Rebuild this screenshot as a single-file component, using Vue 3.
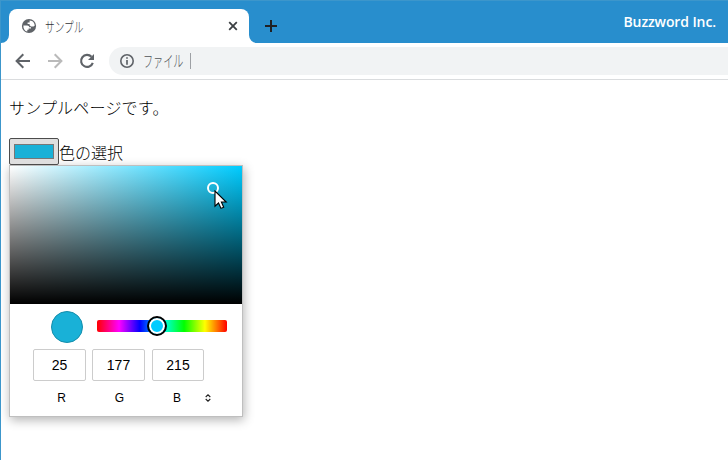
<script setup>
import { ref } from 'vue'

const channels = ref([
  { name: 'R', value: 25 },
  { name: 'G', value: 177 },
  { name: 'B', value: 215 },
])
</script>

<template>
  <div class="window">
    <header class="tabstrip">
      <svg class="curve" width="8" height="8" viewBox="0 0 8 8"><path d="M8 0V8H0A8 8 0 0 0 8 0Z" fill="#fff" /></svg>
      <div class="tab">
        <svg class="globe" width="16" height="16" viewBox="0 0 16 16">
          <circle cx="8" cy="8" r="7.1" fill="#5f6368" />
          <path d="M2.4 7.4H6.2C7.4 7.4 8.2 8.1 8.2 9.2H10V10.6H7.6V11.8H6.3V13.6C3.8 13 2.1 10.7 2.4 7.4Z" fill="#fff" />
          <path d="M8.6 2.4 11 3.1C12.7 4.1 13.7 5.8 13.7 7.7L12.4 8.5H10L8.6 7.3V6.1H6.6V4.6H8.6Z" fill="#fff" />
        </svg>
        <span class="tab-title">サンプル</span>
        <svg class="close" width="10" height="10" viewBox="0 0 10 10"><path d="M1.2 1.2 8.8 8.8M8.8 1.2 1.2 8.8" stroke="#3c4043" stroke-width="1.8" /></svg>
      </div>
      <svg class="curve" width="8" height="8" viewBox="0 0 8 8"><path d="M0 0V8H8A8 8 0 0 1 0 0Z" fill="#fff" /></svg>
      <svg class="plus" width="12" height="12" viewBox="0 0 12 12"><path d="M6 0V12M0 6H12" stroke="#202124" stroke-width="2" /></svg>
      <span class="brand">Buzzword Inc.</span>
    </header>

    <nav class="toolbar">
      <svg width="16" height="16" viewBox="0 0 16 16" fill="none" stroke="#5f6368" stroke-width="2"><path d="M15 8H2M8.3 1.3 1.6 8 8.3 14.7" /></svg>
      <svg width="16" height="16" viewBox="0 0 16 16" fill="none" stroke="#bababa" stroke-width="2"><path d="M1 8H14M7.7 1.3 14.4 8 7.7 14.7" /></svg>
      <svg width="16" height="16" viewBox="0 0 16 16"><path d="M12.5 3.8A6 6 0 1 0 13.8 9.8" fill="none" stroke="#5f6368" stroke-width="2.1" /><path d="M15 1V7H9Z" fill="#5f6368" /></svg>
      <div class="omnibox">
        <svg width="16" height="16" viewBox="0 0 16 16"><circle cx="8" cy="8" r="6.2" fill="none" stroke="#5f6368" stroke-width="1.6" /><path d="M8 4.2V5.8M8 7.1V11.8" stroke="#5f6368" stroke-width="1.7" /></svg>
        <span class="scheme">ファイル</span>
        <i class="divider"></i>
      </div>
    </nav>

    <main class="page">
      <p>サンプルページです。</p>
      <div class="field">
        <button class="swatch"><i></i></button>
        <label>色の選択</label>
      </div>
      <section class="picker">
        <div class="spectrum">
          <i class="ring"></i>
          <svg class="cursor" width="14" height="20" viewBox="0 0 14 20"><path d="M1 1V16.2L4.5 13L7 18.4L9.7 17.2L7.4 12H12.2Z" fill="#fff" stroke="#000" stroke-width="1.1" /></svg>
        </div>
        <div class="controls">
          <i class="preview"></i>
          <div class="hue"><i class="knob"></i></div>
        </div>
        <div class="channels">
          <div v-for="c in channels" :key="c.name" class="channel">
            <input v-model="c.value" type="text" />
            <span>{{ c.name }}</span>
          </div>
          <svg class="updown" width="6" height="8" viewBox="0 0 6 8"><path d="M.7 3 3 .8 5.3 3M.7 5 3 7.2 5.3 5" fill="none" stroke="#222" stroke-width="1.1" /></svg>
        </div>
      </section>
    </main>
  </div>
</template>

<style>
body { margin: 0; background: #fff; overflow: hidden; }
</style>

<style scoped>
* { box-sizing: border-box; }
svg { display: block; flex: none; }
.window {
  width: 728px; height: 460px; overflow: hidden;
  border-left: 1px solid #3c96cb; background: #fff;
  font-family: "Liberation Sans", "Noto Sans CJK JP", sans-serif;
}
.tabstrip {
  height: 43px; display: flex; align-items: flex-end;
  background: #288ecd; border-top: 1px solid #3c96cb;
}
.tab {
  width: 240px; height: 34px; padding: 0 11px 0 12px;
  display: flex; align-items: center;
  background: #fff; border-radius: 8px 8px 0 0;
}
.tab-title {
  margin-left: 8px; width: 60px; font: 300 14px/18px "Noto Sans CJK JP", sans-serif;
  color: #303337; transform: scaleX(.69); transform-origin: left; white-space: nowrap;
}
.close { margin-left: auto; }
.plus { margin: 0 0 11px 8px; }
.brand {
  margin: 0 12px 11px auto; color: #fff; letter-spacing: -.1px;
  font: 600 14px/20px "Open Sans", "Noto Sans", sans-serif;
}
.toolbar {
  height: 37px; padding: 4px 0 4px 14px; display: flex; align-items: center; gap: 16px;
  border-bottom: 1px solid #dadcde;
}
.omnibox {
  flex: 1; height: 28px; margin-left: -2px; padding-left: 10px;
  display: flex; align-items: center; background: #f1f3f4; border-radius: 14px 0 0 14px;
}
.scheme {
  width: 47px; margin: -2px 0 0 8px; font: 16px/20px "Noto Sans CJK JP", sans-serif;
  font-weight: 300; color: #4f5358; transform: scaleX(.63); transform-origin: left; white-space: nowrap;
}
.divider { width: 1px; height: 16px; background: #9da0a4; }
.page { padding: 15px 8px 0; font: 16px/24px "Noto Sans CJK JP", sans-serif; font-weight: 300; color: #000; }
p { margin: 0 0 19px; letter-spacing: .2px; }
.field { display: flex; align-items: center; height: 27px; }
.field label { line-height: 24px; margin-top: 1px; }
.swatch {
  width: 50px; height: 27px; padding: 4px; display: flex;
  background: #dfdfdf; border: 1px solid #4c4c4c; border-radius: 2px;
}
.swatch i { width: 40px; height: 15px; margin-top: 1px; background: #19b1d7; border: 1px solid #777; }
.picker {
  width: 234px; height: 252px; border: 1px solid #bfbfbf; background: #fff;
  box-shadow: 1px 3px 10px rgba(0, 0, 0, .3); font-family: "Liberation Sans", Arial, sans-serif; font-weight: 400;
}
.spectrum {
  position: relative; height: 138px;
  background: linear-gradient(to top, #000, transparent), linear-gradient(to right, #fff, #00ccff);
}
.ring {
  position: absolute; left: 197px; top: 16px; width: 12px; height: 12px;
  border: 2px solid #fff; border-radius: 50%;
}
.cursor { position: absolute; left: 204px; top: 24px; }
.controls { height: 45px; padding: 7px 15px 0 41px; display: flex; }
.preview { width: 32px; height: 32px; border-radius: 50%; background: #19b1d7; border: 1px solid #148eac; }
.hue {
  position: relative; width: 130px; height: 12px; margin: 9px 0 0 14px; border-radius: 2px;
  background: linear-gradient(to left, #f00 0%, #ff0 17%, #0f0 33%, #0ff 50%, #00f 67%, #f0f 83%, #f00 100%);
}
.knob {
  position: absolute; left: 50px; top: -4px; width: 20px; height: 20px;
  border: 2px solid #000; border-radius: 50%; background: #0cf; box-shadow: inset 0 0 0 2px #fff;
}
.channels { display: flex; padding-left: 23px; gap: 6px; }
.channel { width: 53px; display: flex; flex-direction: column; }
.channel:nth-child(3) { width: 52px; margin-left: 1px; }
.channel input {
  width: 100%; height: 32px; padding: 0; text-align: center; outline: 0;
  border: 1px solid #ccc; border-radius: 2px; background: #fff;
  font: 14px "Liberation Sans", Arial, sans-serif; color: #000;
}
.channel span { margin-top: 9px; padding-left: 4px; text-align: center; font-size: 12px; line-height: 16px; }
.channel:nth-child(2) span { padding-left: 2px; }
.channel:nth-child(3) span { padding: 0 2px 0 0; }
.updown { margin: 45px 0 0 -5px; }
</style>
